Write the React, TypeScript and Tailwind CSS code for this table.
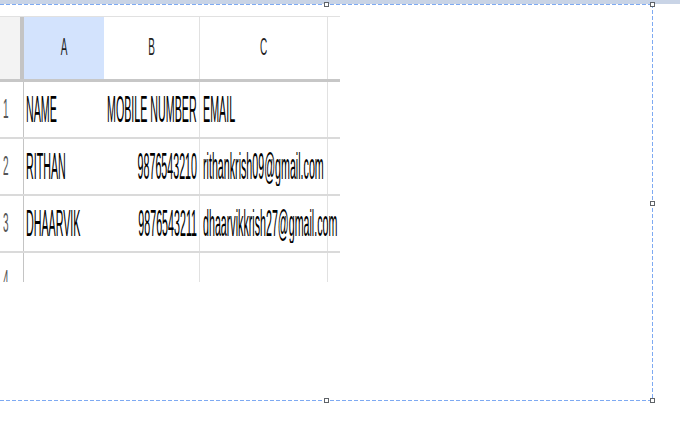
const rows = [
  { n: "1", name: "NAME", mobile: "MOBILE NUMBER", email: "EMAIL", header: true },
  { n: "2", name: "RITHAN", mobile: "9876543210", email: "rithankrish09@gmail.com" },
  { n: "3", name: "DHAARVIK", mobile: "9876543211", email: "dhaarvikkrish27@gmail.com" },
  { n: "4", name: "", mobile: "", email: "" },
];

// stretched text, as the pasted picture was scaled up in height only
const Tall = ({ children, className = "" }: { children: React.ReactNode; className?: string }) => (
  <span className={`inline-block whitespace-nowrap scale-y-[3.4] ${className}`}>{children}</span>
);

const Handle = ({ className }: { className: string }) => (
  <div className={`absolute h-[5px] w-[5px] border border-[#5f6368] bg-white ${className}`} />
);

const Sheet = () => (
  <div className="h-[266px] w-[340px] overflow-hidden border-t border-[#e1e1e1] font-['Liberation_Sans',Arial,sans-serif] text-[10.7px] leading-none text-black">
    <div className="flex h-[62px] items-stretch">
      <div className="w-[20px] bg-[#f3f3f3]" />
      <div className="w-[4px] bg-[#c4c4c4]" />
      <div className="flex w-[80px] items-center justify-center bg-[#d3e3fd] text-[10px] text-[#1f1f1f]">
        <span className="inline-block scale-y-[2.4]">A</span>
      </div>
      <div className="flex w-[96px] items-center justify-center border-r border-[#e1e1e1] bg-white text-[10px] text-[#1f1f1f]">
        <span className="inline-block scale-y-[2.4]">B</span>
      </div>
      <div className="flex w-[128px] items-center justify-center border-r border-[#e1e1e1] bg-white text-[10px] text-[#1f1f1f]">
        <span className="inline-block scale-y-[2.4]">C</span>
      </div>
      <div className="flex-1 bg-white" />
    </div>
    <div className="h-[3px] bg-[#c7c7c7]" />
    {rows.map((r) => (
      <div key={r.n}>
        <div className="flex h-[55px] items-stretch">
          <div className="flex w-[24px] items-center border-r border-[#c4c4c4] pl-[3px] text-[10px] text-[#555]">
            <span className="inline-block scale-y-[2.8]">{r.n}</span>
          </div>
          <div className="flex w-[80px] items-center pl-[2px]">
            <Tall>{r.name}</Tall>
          </div>
          <div
            className={`flex w-[96px] items-center border-r border-[#e1e1e1] ${
              r.header ? "justify-start pl-[3px]" : "justify-end pr-[2px]"
            }`}
          >
            <Tall>{r.mobile}</Tall>
          </div>
          <div className="relative z-10 flex w-[128px] items-center border-r border-[#e1e1e1] pl-[3px]">
            <Tall>{r.email}</Tall>
          </div>
          <div className="flex-1" />
        </div>
        <div className="h-[2px] bg-[#dadada]" />
      </div>
    ))}
  </div>
);

export default function App() {
  return (
    <div className="relative h-[435px] w-[680px] overflow-hidden bg-white">
      <div className="h-[4px] bg-[#c9d4e6]" />
      <div className="mt-[12px]">
        <Sheet />
      </div>

      {/* selection frame around the pasted picture */}
      <div className="pointer-events-none absolute left-0 top-[4px] h-[397px] w-[654px]">
        <div className="absolute left-0 right-0 top-0 h-px bg-[repeating-linear-gradient(90deg,#7eaaf2_0_4px,#ffffff_4px_6px)]" />
        <div className="absolute bottom-0 left-0 right-0 h-px bg-[repeating-linear-gradient(90deg,#7eaaf2_0_4px,#ffffff_4px_6px)]" />
        <div className="absolute bottom-0 right-[1px] top-0 w-px bg-[repeating-linear-gradient(180deg,#7eaaf2_0_4px,#ffffff_4px_6px)]" />
        <Handle className="left-[324px] top-[-2px]" />
        <Handle className="right-[-1px] top-[-2px]" />
        <Handle className="right-[-1px] top-[197px]" />
        <Handle className="bottom-[-2px] left-[324px]" />
        <Handle className="bottom-[-2px] right-[-1px]" />
      </div>
    </div>
  );
}
